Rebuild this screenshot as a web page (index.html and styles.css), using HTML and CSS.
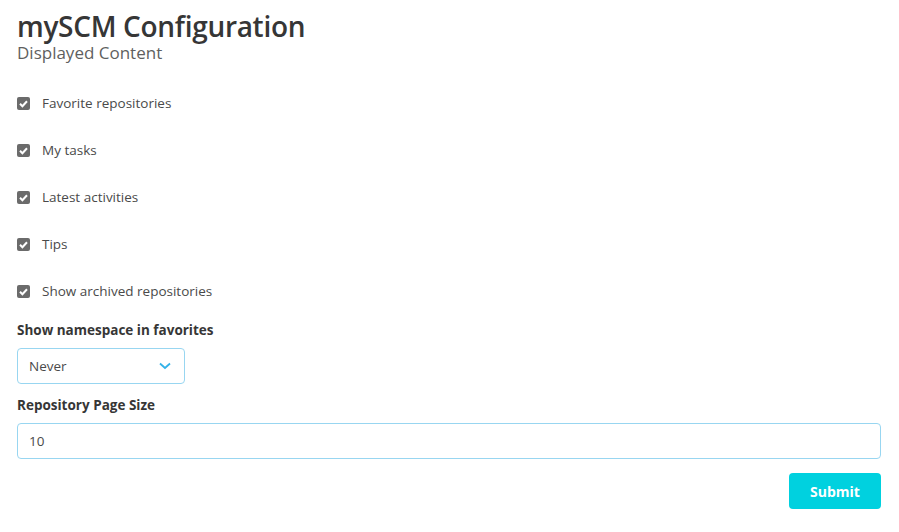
FILE: index.html
```html
<!DOCTYPE html>
<html>
<head>
<meta charset="utf-8">
<link rel="stylesheet" href="styles.css">
</head>
<body>
<main class="page">
  <h1 class="title">mySCM Configuration</h1>
  <h2 class="subtitle">Displayed Content</h2>
  <form class="form">
    <div class="checks">
      <label class="check"><span class="box"><svg viewBox="0 0 13 13" width="13" height="13"><path d="M3 6.8 L5.4 9.2 L10 4.2" fill="none" stroke="#fff" stroke-width="2"/></svg></span>Favorite repositories</label>
      <label class="check"><span class="box"><svg viewBox="0 0 13 13" width="13" height="13"><path d="M3 6.8 L5.4 9.2 L10 4.2" fill="none" stroke="#fff" stroke-width="2"/></svg></span>My tasks</label>
      <label class="check"><span class="box"><svg viewBox="0 0 13 13" width="13" height="13"><path d="M3 6.8 L5.4 9.2 L10 4.2" fill="none" stroke="#fff" stroke-width="2"/></svg></span>Latest activities</label>
      <label class="check"><span class="box"><svg viewBox="0 0 13 13" width="13" height="13"><path d="M3 6.8 L5.4 9.2 L10 4.2" fill="none" stroke="#fff" stroke-width="2"/></svg></span>Tips</label>
      <label class="check"><span class="box"><svg viewBox="0 0 13 13" width="13" height="13"><path d="M3 6.8 L5.4 9.2 L10 4.2" fill="none" stroke="#fff" stroke-width="2"/></svg></span>Show archived repositories</label>
    </div>
    <div class="field">
      <div class="label">Show namespace in favorites</div>
      <div class="select"><span>Never</span><svg class="chev" viewBox="0 0 12 8" width="12" height="8"><path d="M1 1.5 L6 6 L11 1.5" fill="none" stroke="#33b2e8" stroke-width="1.8"/></svg></div>
    </div>
    <div class="field">
      <div class="label">Repository Page Size</div>
      <div class="input">10</div>
    </div>
    <div class="actions">
      <button type="button" class="submit">Submit</button>
    </div>
  </form>
</main>
</body>
</html>
```
FILE: styles.css
```css
* { box-sizing: border-box; }
html, body { margin: 0; padding: 0; background: #fff; }
body { font-family: "Open Sans", "Noto Sans", sans-serif; color: #363636; }
.page { padding: 11px 18px 0 17px; }
.title { margin: 0; font-size: 28px; font-weight: 600; line-height: 30px; color: #363636; letter-spacing: -0.3px; }
.subtitle { margin: 0; font-size: 17px; font-weight: 400; line-height: 24px; color: #5f5f5f; }
.form { margin-top: 28px; }
.checks { display: flex; flex-direction: column; gap: 27px; }
.check { display: flex; align-items: center; font-size: 13.5px; line-height: 20px; color: #4a4a4a; height: 20px; }
.box { width: 13px; height: 13px; border-radius: 2px; background: #6b6b6b; margin-right: 12px; display: flex; }
.field { margin-top: 19px; }
.label { font-weight: 700; font-size: 13.5px; line-height: 20px; color: #363636; margin-bottom: 8px; }
.select { width: 168px; height: 36px; border: 1px solid #98d6f1; border-radius: 4px; display: flex; align-items: center; justify-content: space-between; padding: 0 13px 0 11px; font-size: 13.5px; color: #4a4a4a; }
.chev { display: block; }
.field + .field { margin-top: 11px; }
.input { height: 36px; border: 1px solid #98d6f1; border-radius: 4px; display: flex; align-items: center; padding: 0 11px; font-size: 13.5px; color: #4a4a4a; }
.actions { display: flex; justify-content: flex-end; margin-top: 14px; }
.submit { width: 92px; height: 36px; border: none; border-radius: 4px; background: #00d1df; color: #fff; font-family: inherit; font-weight: 700; font-size: 14px; }
```
